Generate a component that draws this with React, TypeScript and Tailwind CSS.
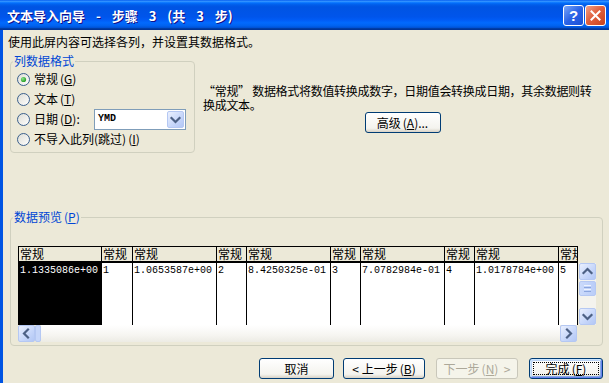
import React from "react";

type Dir = "up" | "down" | "left" | "right";

function Chev({ dir, color = "#4D6185" }: { dir: Dir; color?: string }) {
  const d: Record<Dir, string> = {
    up: "M3.5 9 L7.5 5 L11.5 9",
    down: "M3.5 6 L7.5 10 L11.5 6",
    left: "M9 3.5 L5 7.5 L9 11.5",
    right: "M6 3.5 L10 7.5 L6 11.5",
  };
  return (
    <svg width="15" height="15" viewBox="0 0 15 15">
      <path d={d[dir]} fill="none" stroke={color} strokeWidth="2.2" strokeLinecap="square" />
    </svg>
  );
}

function ScrollBtn({ dir }: { dir: Dir }) {
  return (
    <div className="w-[17px] h-[17px] shrink-0 rounded-[2px] border border-[#B5C8F3] bg-[linear-gradient(135deg,#EAF0FE,#C6D6FA_60%,#B3C7F5)] flex items-center justify-center">
      <Chev dir={dir} />
    </div>
  );
}

function Radio({ checked }: { checked?: boolean }) {
  return (
    <svg width="13" height="13" viewBox="0 0 13 13" className="shrink-0">
      <defs>
        <linearGradient id="rbg" x1="0" y1="0" x2="1" y2="1">
          <stop offset="0" stopColor="#DCDCD4" />
          <stop offset="1" stopColor="#FFFFFF" />
        </linearGradient>
        <radialGradient id="rdot" cx="0.35" cy="0.35" r="0.7">
          <stop offset="0" stopColor="#8AE38A" />
          <stop offset="1" stopColor="#219B21" />
        </radialGradient>
      </defs>
      <circle cx="6.5" cy="6.5" r="6" fill="url(#rbg)" stroke="#3A5F8C" strokeWidth="1" />
      {checked && <circle cx="6.5" cy="6.5" r="2.6" fill="url(#rdot)" />}
    </svg>
  );
}

const btnBase =
  "h-[21px] shrink-0 rounded-[3px] border text-[12px] leading-none flex items-center justify-center whitespace-nowrap";
const btnNormal =
  "border-[#003C74] text-black bg-[linear-gradient(to_bottom,#FFFFFF,#F4F3EE_80%,#D8D2C6)]";

const cols = [
  { w: "w-[83px]", v: "1.1335086e+00", sel: true },
  { w: "w-[31px]", v: "1" },
  { w: "w-[84px]", v: "1.0653587e+00" },
  { w: "w-[30px]", v: "2" },
  { w: "w-[84px]", v: "8.4250325e-01" },
  { w: "w-[30px]", v: "3" },
  { w: "w-[84px]", v: "7.0782984e-01" },
  { w: "w-[30px]", v: "4" },
  { w: "w-[84px]", v: "1.0178784e+00" },
  { w: "w-[30px]", v: "5" },
];

export default function App() {
  return (
    <div className="w-[609px] h-[383px] overflow-hidden flex flex-col bg-[#0054E3] font-['Noto_Sans_CJK_SC','Noto_Sans',sans-serif] text-[12px] text-black">
      {/* Title bar */}
      <div className="h-[30px] shrink-0 flex items-center pl-[7px] pr-[3px] bg-[linear-gradient(to_bottom,#0058EE_0%,#3593FF_4%,#288EFF_6%,#127DFF_8%,#036FFC_10%,#0262EE_14%,#0057E5_20%,#0054E3_24%,#0055EB_56%,#005BF5_66%,#026AFE_76%,#0062EF_86%,#0052D6_92%,#0040AB_94%,#003092_100%)]">
        <span className="text-white font-bold text-[13px] leading-none [word-spacing:8px] [text-shadow:1px_1px_#0F1089] whitespace-pre">
          文本导入向导 - 步骤 3 (共 3 步)
        </span>
        <div className="ml-auto flex gap-[1px]">
          <div className="w-[21px] h-[21px] rounded-[3px] border border-white bg-[linear-gradient(135deg,#7AA6F8,#2B63E6_50%,#1A4FD6)] flex items-center justify-center">
            <span className="text-white font-bold text-[15px] leading-none font-['Liberation_Sans',sans-serif]">?</span>
          </div>
          <div className="w-[21px] h-[21px] rounded-[3px] border border-white bg-[linear-gradient(135deg,#F0A088,#E0613F_45%,#C8421C)] flex items-center justify-center">
            <svg width="13" height="13" viewBox="0 0 13 13">
              <path d="M2.5 2.5 L10.5 10.5 M10.5 2.5 L2.5 10.5" stroke="white" strokeWidth="2" strokeLinecap="square" />
            </svg>
          </div>
        </div>
      </div>

      {/* Body */}
      <div className="flex-1 ml-[3px] bg-[#ECE9D8] flex flex-col">
        <div className="pl-[5px] pt-[5px] leading-[14px] whitespace-nowrap">
          使用此屏内容可选择各列，并设置其数据格式。
        </div>

        {/* Row 1 */}
        <div className="flex mt-[5px]">
          <fieldset className="ml-[7px] w-[185px] h-[99px] shrink-0 border border-[#D0D0BF] rounded-[4px]">
            <legend className="ml-[2px] px-[1px] text-[#0046D5] leading-[14px]">列数据格式</legend>
            <div className="flex flex-col pl-[6px] pt-[1px]">
              <div className="h-[20px] flex items-center">
                <Radio checked />
                <span className="ml-[4px] leading-none">
                  常规<span className="ml-[2px]">(<u>G</u>)</span>
                </span>
              </div>
              <div className="h-[20px] flex items-center">
                <Radio />
                <span className="ml-[4px] leading-none">
                  文本<span className="ml-[2px]">(<u>T</u>)</span>
                </span>
              </div>
              <div className="h-[20px] flex items-center">
                <Radio />
                <span className="ml-[4px] w-[60px] leading-none">
                  日期<span className="ml-[2px]">(<u>D</u>):</span>
                </span>
                <div className="w-[92px] h-[21px] border border-[#7F9DB9] bg-white flex items-center">
                  <span className="flex-1 pl-[3px] font-['Liberation_Mono',monospace] font-bold text-[10px] leading-none">
                    YMD
                  </span>
                  <div className="mr-[1px]">
                    <ScrollBtn dir="down" />
                  </div>
                </div>
              </div>
              <div className="h-[20px] flex items-center">
                <Radio />
                <span className="ml-[4px] leading-none">
                  不导入此列(跳过)<span className="ml-[2px]">(<u>I</u>)</span>
                </span>
              </div>
            </div>
          </fieldset>

          <div className="ml-[8px] w-[399px] pt-[30px] flex flex-col items-center">
            <div className="self-stretch leading-[14px] whitespace-nowrap tracking-[-0.3px]">
              <div>“常规” 数据格式将数值转换成数字，日期值会转换成日期，其余数据则转</div>
              <div>换成文本。</div>
            </div>
            <button className={`${btnBase} ${btnNormal} w-[76px] mt-0`}>
              高级<span className="ml-[2px]">(<u>A</u>)...</span>
            </button>
          </div>
        </div>

        {/* Preview group */}
        <fieldset className="mt-[57px] ml-[7px] w-[593px] h-[136px] shrink-0 border border-[#D0D0BF] rounded-[4px]">
          <legend className="ml-[2px] px-[1px] text-[#0046D5] leading-[14px]">
            数据预览<span className="ml-[2px]">(<u>P</u>)</span>
          </legend>
          <div className="flex pl-[7px] pt-[22px]">
            <div className="w-[560px] flex flex-col">
              <div className="h-[79px] flex overflow-hidden border-r border-black">
                {cols.map((c, i) => (
                  <div key={i} className={`${c.w} shrink-0 border-l border-black flex flex-col`}>
                    <div className="h-[15px] border-t border-black bg-[#ECE9D8] leading-[14px] pl-[1px] whitespace-nowrap">
                      常规
                    </div>
                    <div className="h-[2px] bg-black" />
                    <div
                      className={`flex-1 pl-[1px] pt-[2px] font-['Liberation_Mono',monospace] text-[10px] leading-[12px] whitespace-nowrap ${
                        c.sel ? "bg-black text-white" : "bg-white text-black"
                      }`}
                    >
                      {c.v}
                    </div>
                  </div>
                ))}
              </div>
              <div className="h-[17px] flex">
                <ScrollBtn dir="left" />
                <div className="w-[6px] h-[17px] rounded-[2px] border border-[#B5C8F3] bg-[#C6D6FA]" />
                <div className="flex-1 bg-[linear-gradient(to_bottom,#FFFFFF,#F6F5F1_60%,#ECEBE4)]" />
                <ScrollBtn dir="right" />
                <div className="w-[1px]" />
              </div>
            </div>
            <div className="ml-[1px] mt-[17px] w-[17px] h-[62px] flex flex-col bg-[#F4F3EE]">
              <ScrollBtn dir="up" />
              <div className="mt-[1px] h-[15px] rounded-[2px] border border-[#B5C8F3] bg-[linear-gradient(to_right,#CBDAFB,#BACDF8)] flex flex-col items-center justify-center gap-[1px]">
                <div className="w-[7px] h-[1px] bg-[#EEF3FE]" />
                <div className="w-[7px] h-[1px] bg-[#8CA6DE]" />
                <div className="w-[7px] h-[1px] bg-[#EEF3FE]" />
                <div className="w-[7px] h-[1px] bg-[#8CA6DE]" />
              </div>
              <div className="flex-1" />
              <ScrollBtn dir="down" />
            </div>
          </div>
        </fieldset>

        {/* Bottom buttons */}
        <div className="mt-[12px] flex justify-end pr-[6px]">
          <button className={`${btnBase} ${btnNormal} w-[75px]`}>取消</button>
          <button className={`${btnBase} ${btnNormal} w-[82px] ml-[9px]`}>
            &lt; 上一步<span className="ml-[2px]">(<u>B</u>)</span>
          </button>
          <button className={`${btnBase} w-[82px] ml-[11px] border-[#C9C7BA] text-[#ACA899] bg-[#F5F4EA]`}>
            下一步<span className="ml-[2px]">(<u>N</u>)</span>&nbsp;&nbsp;&gt;
          </button>
          <button
            className={`${btnBase} ${btnNormal} w-[74px] ml-[11px] p-[3px] shadow-[inset_1px_1px_0_#CEE7FF,inset_-1px_-1px_0_#6982EE,inset_2px_2px_0_#BCD4F6,inset_-2px_-2px_0_#89ADE4]`}
          >
            <span className="w-full h-full border border-dotted border-black flex items-center justify-center">
              完成<span className="ml-[2px]">(<u>F</u>)</span>
            </span>
          </button>
        </div>
      </div>
    </div>
  );
}
